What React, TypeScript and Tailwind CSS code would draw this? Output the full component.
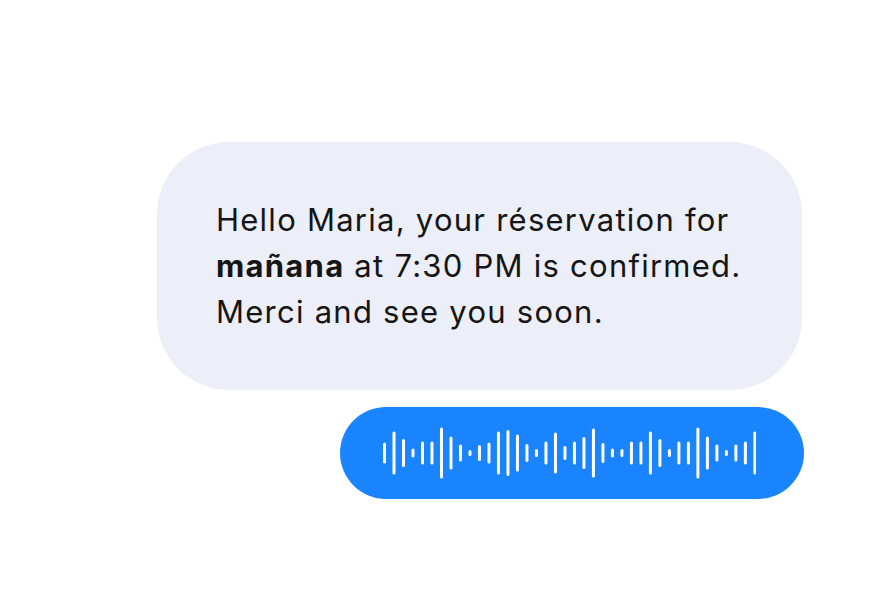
import React from "react";

const heights = [21,43,28,9,23,23,51,33,17,6,16,21,43,46,37,18,8,23,41,14,23,32,49,20,9,8,23,23,43,28,8,23,23,51,33,17,6,17,23,43];

function Wave() {
  const step = 9.497;
  const w = 3 + step * (heights.length - 1);
  return (
    <svg width={w} height={56} viewBox={`0 0 ${w} 56`}>
      {heights.map((h, i) => {
        const x = 1.5 + i * step;
        const len = Math.max(h - 3, 0.01);
        return (
          <line
            key={i}
            x1={x}
            x2={x}
            y1={28 - len / 2}
            y2={28 + len / 2}
            stroke="white"
            strokeWidth={3}
            strokeLinecap="round"
          />
        );
      })}
    </svg>
  );
}

export default function App() {
  return (
    <div className="w-[884px] h-[594px] bg-white flex flex-col items-end pt-[142px] pr-[80px]" style={{ fontFamily: "Inter, 'Noto Sans', sans-serif" }}>
      <div className="w-[645px] mr-[2px] rounded-[72px] bg-[#ECEEF8] pl-[59px] pt-[55px] pb-[54px] text-[31px] leading-[46.2px] text-[#151515] tracking-[1.25px]">
        <p>Hello Maria, your réservation for</p>
        <p><span className="font-bold">mañana</span> at 7:30 PM is confirmed.</p>
        <p>Merci and see you soon.</p>
      </div>
      <div className="mt-[17px] w-[464px] h-[92px] rounded-full bg-[#1A84FF] flex items-center pl-[43px]">
        <Wave />
      </div>
    </div>
  );
}
